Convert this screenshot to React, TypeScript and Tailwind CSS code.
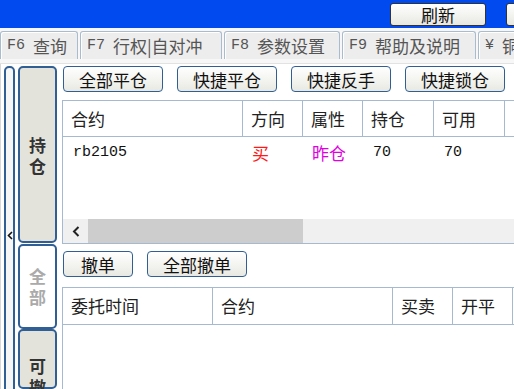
import React from 'react';

const cjk = '"Noto Sans CJK SC", "Liberation Sans", sans-serif';
const mono = '"Liberation Mono", "Noto Sans CJK SC", monospace';

function Btn({ label, w }: { label: string; w: string }) {
  return (
    <div
      className={`${w} h-[26px] shrink-0 flex items-center justify-center rounded-[4px] border border-[#2f5f94] bg-gradient-to-b from-white to-[#e9e9e3] text-[17px] leading-none text-[#111]`}
    >
      {label}
    </div>
  );
}

function Tab({ fkey, label, w }: { fkey: string; label: string; w: string }) {
  return (
    <div
      className={`${w} h-[28px] shrink-0 flex items-center gap-[8px] pl-[6px] rounded-t-[3px] border border-b-0 border-[#a9bccd] bg-[#ededed] shadow-[inset_1px_1px_0_#ffffff] text-[17px] leading-none text-[#555] whitespace-nowrap overflow-hidden`}
    >
      <span className="text-[15px]" style={{ fontFamily: mono }}>{fkey}</span>
      <span>{label}</span>
    </div>
  );
}

function SideTab({ label, h, active, muted }: { label: string; h: string; active?: boolean; muted?: boolean }) {
  return (
    <div
      className={`${h} w-[39px] shrink-0 flex flex-col items-center justify-center rounded-[5px] border-2 border-[#2f5f94] ${active ? 'bg-[#e3e3dc]' : 'bg-white'} ${muted ? 'text-[#aaa]' : 'text-[#333]'} text-[17px] font-bold leading-[21px]`}
    >
      {label.split('').map((c) => (
        <span key={c}>{c}</span>
      ))}
    </div>
  );
}

function HeadCell({ label, w }: { label: string; w: string }) {
  return (
    <div className={`${w} shrink-0 h-full flex items-center pl-[8px] border-r border-[#a5bad1] text-[17px] text-[#222]`}>
      {label}
    </div>
  );
}

export default function App() {
  return (
    <div className="w-[514px] h-[389px] overflow-hidden bg-white flex flex-col" style={{ fontFamily: cjk }}>
      {/* top bar */}
      <div className="h-[28px] shrink-0 bg-[#004aef] flex items-center pl-[390px] gap-[20px]">
        <div className="w-[96px] h-[23px] shrink-0 flex items-center justify-center rounded-[3px] border border-[#333] bg-gradient-to-b from-white to-[#e8e8e2] text-[17px] leading-none text-[#111]">
          刷新
        </div>
        <div className="w-[96px] h-[23px] shrink-0 rounded-[3px] border border-[#333] bg-gradient-to-b from-white to-[#e8e8e2]" />
      </div>

      {/* function tabs */}
      <div className="h-[36px] shrink-0 flex items-end gap-[2px] pt-[3px] bg-[#f7f7f7] border-b border-[#e2e2e2] pb-[4px]">
        <Tab fkey="F6" label="查询" w="w-[78px]" />
        <Tab fkey="F7" label="行权|自对冲" w="w-[142px]" />
        <Tab fkey="F8" label="参数设置" w="w-[116px]" />
        <Tab fkey="F9" label="帮助及说明" w="w-[134px]" />
        <Tab fkey="¥" label="铜" w="w-[60px]" />
      </div>

      {/* body */}
      <div className="flex-1 flex min-h-0">
        {/* collapse strip */}
        <div className="w-[18px] shrink-0 flex pl-[3px] pt-[2px] border-l border-[#d8d8d8]">
          <div className="w-[11px] h-[340px] rounded-t-[5px] border-2 border-[#2f5f94] bg-[#f6f6f6] flex flex-col items-center pt-[163px]">
            <svg width="6" height="9" viewBox="0 0 6 9">
              <path d="M5 1 L1.5 4.5 L5 8" stroke="#111" strokeWidth="1.6" fill="none" />
            </svg>
          </div>
        </div>

        {/* side tabs */}
        <div className="w-[42px] shrink-0 flex flex-col pt-[2px]">
          <SideTab label="持仓" h="h-[177px]" active />
          <div className="h-[7px]" />
          <SideTab label="全部" h="h-[85px]" muted />
          <div className="h-[4px]" />
          <div className="h-[60px] w-[39px] shrink-0 flex flex-col items-center pt-[24px] rounded-[5px] border-2 border-[#2f5f94] bg-[#e3e3dc] text-[#333] text-[17px] font-bold leading-[21px]">
            <span>可</span>
            <span>撤</span>
          </div>
        </div>

        {/* main */}
        <div className="flex-1 flex flex-col min-w-0 pl-[2px] pt-[2px]">
          <div className="flex gap-[14px] pl-[1px]">
            <Btn label="全部平仓" w="w-[100px]" />
            <Btn label="快捷平仓" w="w-[100px]" />
            <Btn label="快捷反手" w="w-[100px]" />
            <Btn label="快捷锁仓" w="w-[100px]" />
          </div>

          {/* positions table */}
          <div className="mt-[8px] h-[144px] shrink-0 border border-r-0 border-[#a5bad1] flex flex-col">
            <div className="h-[36px] shrink-0 flex border-b border-[#a5bad1]">
              <HeadCell label="合约" w="w-[180px]" />
              <HeadCell label="方向" w="w-[60px]" />
              <HeadCell label="属性" w="w-[60px]" />
              <HeadCell label="持仓" w="w-[71px]" />
              <HeadCell label="可用" w="w-[71px]" />
              <HeadCell label="" w="w-[40px]" />
            </div>
            <div className="h-[32px] shrink-0 flex items-center text-[17px]">
              <div className="w-[181px] pl-[10px] text-[15px] text-[#111]" style={{ fontFamily: mono }}>rb2105</div>
              <div className="w-[60px] pl-[8px] text-[#ff1a1a]">买</div>
              <div className="w-[60px] pl-[8px] text-[#e000e0]">昨仓</div>
              <div className="w-[71px] pl-[9px] text-[15px] text-[#111]" style={{ fontFamily: mono }}>70</div>
              <div className="w-[71px] pl-[9px] text-[15px] text-[#111]" style={{ fontFamily: mono }}>70</div>
            </div>
            <div className="flex-1" />
            <div className="h-[24px] shrink-0 flex bg-[#f0f0f0]">
              <div className="w-[25px] flex items-center justify-center">
                <svg width="8" height="11" viewBox="0 0 8 11">
                  <path d="M6.5 1 L2 5.5 L6.5 10" stroke="#222" strokeWidth="2" fill="none" />
                </svg>
              </div>
              <div className="w-[215px] bg-[#cdcdcd]" />
            </div>
          </div>

          <div className="flex gap-[14px] pl-[1px] mt-[7px]">
            <Btn label="撤单" w="w-[70px]" />
            <Btn label="全部撤单" w="w-[100px]" />
          </div>

          {/* orders table */}
          <div className="mt-[10px] h-[38px] shrink-0 flex border border-r-0 border-[#a5bad1]">
            <HeadCell label="委托时间" w="w-[150px]" />
            <HeadCell label="合约" w="w-[180px]" />
            <HeadCell label="买卖" w="w-[60px]" />
            <HeadCell label="开平" w="w-[60px]" />
          </div>
          <div className="flex-1 border-l border-[#a5bad1]" />
        </div>
      </div>
    </div>
  );
}
